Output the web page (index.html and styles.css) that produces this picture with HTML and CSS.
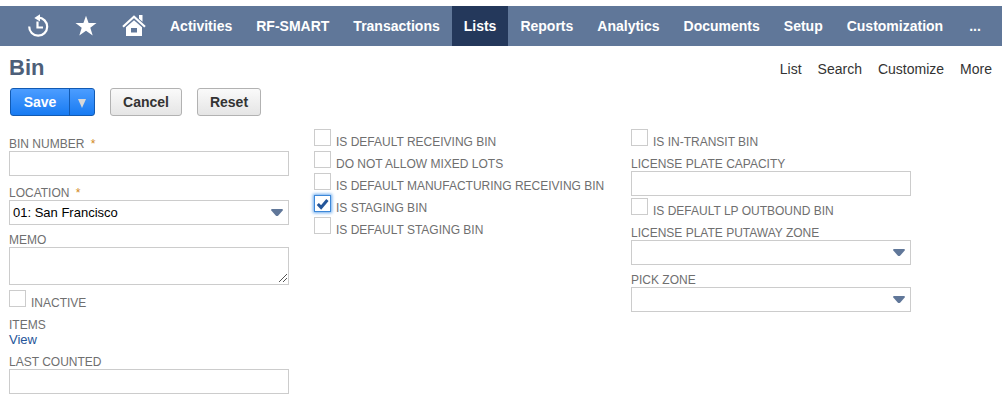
FILE: index.html
```html
<!DOCTYPE html>
<html lang="en">
<head>
<meta charset="utf-8">
<title>Bin</title>
<link rel="stylesheet" href="styles.css">
</head>
<body>
<nav class="nav">
  <a class="nav-icon recent"><svg width="24" height="24" viewBox="0 0 24 24" fill="none" stroke="#fff" stroke-width="2.2"><path d="M3.2 12.5a9 9 0 1 0 9-8.8"/><path d="M11.5 7.5v6h5.5"/><path d="M8.3 4 14 .3v7.2z" fill="#fff" stroke="none"/></svg></a>
  <a class="nav-icon star"><svg width="22" height="22" viewBox="0 0 22 22"><path fill="#fff" d="M11 .7 13.6 8H21.5l-6.2 4.7 2.4 7.7L11 15.7l-6.7 4.7 2.4-7.7L.5 8h7.9z"/></svg></a>
  <a class="nav-icon home"><svg width="24" height="22" viewBox="0 0 24 22"><path d="M1 11.7 12 1.8l11 9.9" fill="none" stroke="#fff" stroke-width="2.2"/><path fill="#fff" d="M17 0h3.5v6.7L17 3.8z"/><path fill="#fff" fill-rule="evenodd" d="M4 12.2 12 5.2l8 7V21H4zM9 13v4.5h6V13z"/></svg></a>
  <a class="tab">Activities</a>
  <a class="tab">RF-SMART</a>
  <a class="tab">Transactions</a>
  <a class="tab active">Lists</a>
  <a class="tab">Reports</a>
  <a class="tab">Analytics</a>
  <a class="tab">Documents</a>
  <a class="tab">Setup</a>
  <a class="tab">Customization</a>
  <a class="tab more">...</a>
</nav>
<header class="head">
  <h1 class="title">Bin</h1>
  <div class="links"><a>List</a><a>Search</a><a>Customize</a><a>More</a></div>
</header>
<div class="buttons">
  <div class="save"><button class="save-main">Save</button><button class="save-menu" aria-label="Save options"><svg width="8" height="9" viewBox="0 0 8 9"><path d="M0 0h8L4 9z" fill="#d8d8d8"/></svg></button></div>
  <button class="btn cancel">Cancel</button>
  <button class="btn reset">Reset</button>
</div>
<main class="form">
  <section class="col first">
    <div class="field"><div class="label">BIN NUMBER <span class="req">*</span></div><div class="input"></div></div>
    <div class="field location"><div class="label">LOCATION <span class="req">*</span></div><div class="input select"><span>01: San Francisco</span><svg class="arrow" width="12" height="7" viewBox="0 0 12 7"><path d="M1 0h10q1.4.4.7 1.6L7.3 6.4q-1.3 1.1-2.6 0L.3 1.6Q-.4.4 1 0z"/></svg></div></div>
    <div class="field"><div class="label">MEMO</div><div class="input area"><svg class="grip" width="9" height="9" viewBox="0 0 9 9" shape-rendering="crispEdges"><path d="M.5 8.5l8-8M4.5 8.5l4-4"/></svg></div></div>
    <div class="check inactive"><span class="box"></span><span class="label">INACTIVE</span></div>
    <div class="field"><div class="label">ITEMS</div><a class="view">View</a></div>
    <div class="field"><div class="label">LAST COUNTED</div><div class="input"></div></div>
  </section>
  <section class="col second">
    <div class="check"><span class="box"></span><span class="label">IS DEFAULT RECEIVING BIN</span></div>
    <div class="check"><span class="box"></span><span class="label">DO NOT ALLOW MIXED LOTS</span></div>
    <div class="check"><span class="box"></span><span class="label">IS DEFAULT MANUFACTURING RECEIVING BIN</span></div>
    <div class="check"><span class="box on"><svg width="13" height="12" viewBox="0 0 13 12"><path d="M1.8 6l3.3 3.4L11.4 2" fill="none" stroke="#24569a" stroke-width="3"/></svg></span><span class="label">IS STAGING BIN</span></div>
    <div class="check"><span class="box"></span><span class="label">IS DEFAULT STAGING BIN</span></div>
  </section>
  <section class="col third">
    <div class="check"><span class="box"></span><span class="label">IS IN-TRANSIT BIN</span></div>
    <div class="field capacity"><div class="label">LICENSE PLATE CAPACITY</div><div class="input"></div></div>
    <div class="check"><span class="box"></span><span class="label">IS DEFAULT LP OUTBOUND BIN</span></div>
    <div class="field putaway"><div class="label">LICENSE PLATE PUTAWAY ZONE</div><div class="input select"><span></span><svg class="arrow" width="12" height="7" viewBox="0 0 12 7"><path d="M1 0h10q1.4.4.7 1.6L7.3 6.4q-1.3 1.1-2.6 0L.3 1.6Q-.4.4 1 0z"/></svg></div></div>
    <div class="field"><div class="label">PICK ZONE</div><div class="input select"><span></span><svg class="arrow" width="12" height="7" viewBox="0 0 12 7"><path d="M1 0h10q1.4.4.7 1.6L7.3 6.4q-1.3 1.1-2.6 0L.3 1.6Q-.4.4 1 0z"/></svg></div></div>
  </section>
</main>
</body>
</html>
```
FILE: styles.css
```css
* { box-sizing: border-box; }
body { margin: 0; padding-top: 6px; background: #fff; font-family: "Liberation Sans", Arial, sans-serif; overflow: hidden; }
svg { display: block; flex: none; }
.nav { display: flex; height: 40px; padding-left: 26px; background: #607799; }
.nav-icon { display: flex; align-items: center; }
.star { margin-left: 25px; }
.home { margin-left: 25px; margin-right: 12px; }
.tab { padding: 0 12px; font-size: 14px; font-weight: bold; line-height: 40px; color: #fff; white-space: nowrap; }
.active { background: #24385b; }
.more { padding-left: 14px; }
.head { display: flex; justify-content: space-between; height: 42px; padding: 8px 10px 0 9px; }
.title { margin: 0; padding-top: 1px; font-size: 22px; line-height: 26px; color: #4d5f79; }
.links { display: flex; gap: 16px; padding-top: 5px; font-size: 14px; line-height: 20px; color: #333; }
.buttons { display: flex; height: 28px; padding-left: 10px; }
.save { display: flex; width: 85px; border: 1px solid #125ab2; border-radius: 3px; background: linear-gradient(#4c9dff, #187bf2); }
button { font: bold 14px "Liberation Sans", Arial, sans-serif; padding: 0; }
.save-main { width: 58px; border: 0; background: none; color: #fff; }
.save-menu { display: flex; flex: 1; align-items: center; justify-content: center; padding-top: 2px; border: 0; border-left: 1px solid #125ab2; background: none; }
.btn { border: 1px solid #b2b2b2; border-radius: 3px; background: linear-gradient(#fafafa, #e5e5e5); color: #333; }
.cancel { width: 72px; margin-left: 15px; }
.reset { width: 64px; margin-left: 15px; }
.form { display: flex; padding: 13px 0 0 9px; }
.col { width: 280px; }
.first { padding-top: 7px; }
.second { width: 292px; margin-left: 25px; }
.third { margin-left: 25px; }
.label { height: 15px; font-size: 12px; line-height: 17px; color: #6f6f6f; white-space: nowrap; }
.req { margin-left: 3px; color: #d28a1c; }
.field { margin-bottom: 7px; }
.location { margin-top: 9px; }
.input { display: flex; width: 280px; height: 25px; border: 1px solid #ccc; }
.select { align-items: center; justify-content: space-between; padding: 0 5px 0 3px; font-size: 13px; line-height: 23px; color: #000; }
.arrow { fill: #607799; }
.area { height: 38px; align-items: flex-end; justify-content: flex-end; padding: 1px; }
.grip { fill: none; stroke: #555; stroke-width: 1; }
.check { display: flex; align-items: flex-start; gap: 5px; height: 22px; }
.check .label { margin-top: 5px; }
.box { display: flex; align-items: center; justify-content: center; flex: none; width: 17px; height: 17px; border: 1px solid #ccc; }
.on { border-color: #3c87d8; box-shadow: 0 0 3px 1px #69a9ee; }
.inactive { height: 27px; margin-top: -2px; }
.view { display: block; font-size: 13px; line-height: 15px; color: #255599; }
.capacity { margin: 5px 0 2px; }
.putaway { margin-top: 5px; }
```
